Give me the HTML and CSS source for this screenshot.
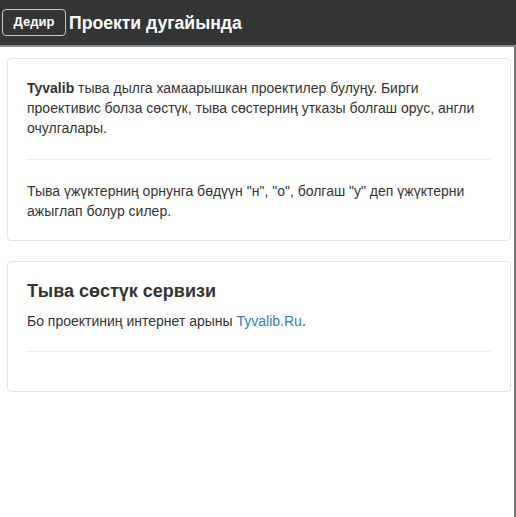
FILE: index.html
```html
<!DOCTYPE html>
<html lang="tyv">
<head>
<meta charset="utf-8">
<title>Проекти дугайында</title>
<link rel="stylesheet" href="styles.css">
</head>
<body>
<header class="topbar">
  <a class="back-btn" href="#">Дедир</a>
  <h1 class="title">Проекти дугайында</h1>
</header>
<main class="content">
  <section class="card card-about">
    <p><b>Tyvalib</b> тыва дылга хамаарышкан проектилер булуңу. Бирги проективис болза сөстүк, тыва сөстерниң утказы болгаш орус, англи очулгалары.</p>
    <hr>
    <p class="last">Тыва үжүктерниң орнунга бөдүүн "н", "о", болгаш "у" деп үжүктерни ажыглап болур силер.</p>
  </section>
  <section class="card">
    <h2 class="card-title">Тыва сөстүк сервизи</h2>
    <p>Бо проектиниң интернет арыны <a class="link" href="#">Tyvalib.Ru</a>.</p>
    <hr>
  </section>
</main>
</body>
</html>
```
FILE: styles.css
```css
html, body {
  margin: 0;
  padding: 0;
  background: #fff;
}
body {
  font-family: "Liberation Sans", Arial, sans-serif;
  font-size: 14px;
  line-height: 20px;
  color: #333;
  height: 517px;
  display: flex;
  flex-direction: column;
}
.topbar {
  height: 45px;
  background: #333436;
  border-bottom: 2px solid #8a8a8a;
  display: flex;
  align-items: center;
  padding-left: 2px;
  gap: 3px;
  box-sizing: content-box;
}
.back-btn {
  display: inline-flex;
  align-items: center;
  justify-content: center;
  height: 25px;
  width: 62px;
  margin-bottom: 1px;
  border: 1px solid #c8c8c8;
  border-radius: 4px;
  color: #fff;
  font-weight: bold;
  font-size: 13px;
  text-decoration: none;
}
.title {
  margin: 0;
  color: #fff;
  font-size: 17.6px;
  font-weight: bold;
  line-height: 24px;
}
.content {
  flex: 1;
  padding: 11px 3px 0 7px;
  border-right: 2px solid #777;
}
.card {
  border: 1px solid #e3e3e3;
  border-radius: 4px;
  padding: 19px;
  margin-bottom: 20px;
  background: #fff;
}
.card p {
  margin: 0 0 10px;
}
.card p.last {
  margin-bottom: 0;
}
.card hr {
  margin: 20px 0;
  border: 0;
  border-top: 1px solid #eee;
}
.card-about hr {
  margin: 21px 0;
}
.card-title {
  margin: 0 0 10px;
  font-size: 18px;
  line-height: 20px;
  font-weight: bold;
  color: #333;
}
.link {
  color: #337ab7;
  text-decoration: none;
}
```
